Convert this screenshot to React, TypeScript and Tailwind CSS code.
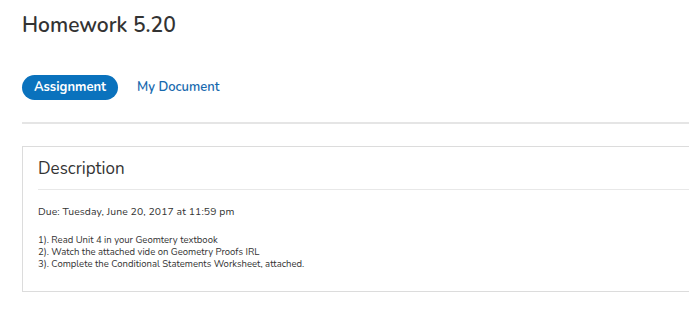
export default function App() {
  return (
    <div
      className="h-[319px] w-[689px] overflow-hidden bg-white pl-[22px] text-[#333]"
      style={{ fontFamily: '"Nunito", "Open Sans", "Liberation Sans", sans-serif' }}
    >
      <h1 className="pt-[10px] text-[21px] font-semibold leading-[30px] text-[#333]">Homework 5.20</h1>

      <div className="mt-[35px] flex items-center gap-[19px]">
        <span className="flex h-[25px] w-[96px] items-center justify-center rounded-full bg-[#0a72bd] text-[13px] font-bold text-white">
          Assignment
        </span>
        <span className="text-[13px] font-semibold text-[#1769ae]">My Document</span>
      </div>

      <div className="mt-[22px] h-[2px] w-[700px] bg-[#e5e5e5]" />

      <div className="mt-[22px] h-[146px] w-[700px] border border-[#dcdcdc] pl-[15px]">
        <div className="border-b border-[#e8e8e8] pb-[8px] pt-[10px] text-[17px] leading-[24px] text-[#333]">
          Description
        </div>
        <p className="mt-[15px] text-[10.4px] tracking-[0.1px] leading-[14px] text-[#333]">Due: Tuesday, June 20, 2017 at 11:59 pm</p>
        <div className="mt-[15px] text-[9.5px] leading-[12px] text-[#333]">
          <p>1). Read Unit 4 in your Geomtery textbook</p>
          <p>2). Watch the attached vide on Geometry Proofs IRL</p>
          <p>3). Complete the Conditional Statements Worksheet, attached.</p>
        </div>
      </div>
    </div>
  );
}
